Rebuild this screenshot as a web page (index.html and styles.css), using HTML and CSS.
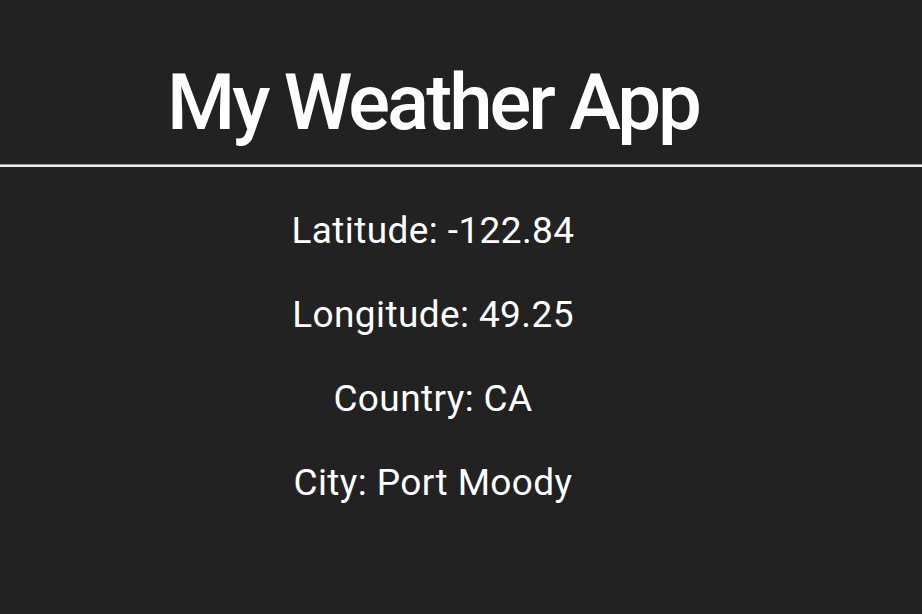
FILE: index.html
```html
<!DOCTYPE html>
<html lang="en">
<head>
<meta charset="utf-8">
<title>My Weather App</title>
<link rel="stylesheet" href="styles.css">
</head>
<body>
<header class="app-header">
  <h1 class="app-title">My Weather App</h1>
</header>
<hr class="divider">
<main class="info">
  <p class="info-line">Latitude: -122.84</p>
  <p class="info-line">Longitude: 49.25</p>
  <p class="info-line">Country: CA</p>
  <p class="info-line">City: Port Moody</p>
</main>
</body>
</html>
```
FILE: styles.css
```css
html, body {
  margin: 0;
  padding: 0;
  background: #232222;
  color: #ffffff;
  font-family: Roboto, "Liberation Sans", sans-serif;
}
body {
  min-height: 614px;
}
.app-header {
  padding-top: 63px;
  padding-right: 56px;
  text-align: center;
}
.app-title {
  margin: 0;
  font-size: 78px;
  line-height: 80px;
  font-weight: 500;
  letter-spacing: -3px;
}
.divider {
  margin: 21px 0 0 0;
  height: 0;
  border: 0;
  border-top: 1px solid #9a9a9a;
  border-bottom: 2px solid #eeeeee;
}
.info {
  padding-top: 46px;
  padding-right: 56px;
  text-align: center;
  display: flex;
  flex-direction: column;
  gap: 48px;
}
.info-line {
  margin: 0;
  font-size: 37px;
  line-height: 36px;
  letter-spacing: 0.4px;
}
```
